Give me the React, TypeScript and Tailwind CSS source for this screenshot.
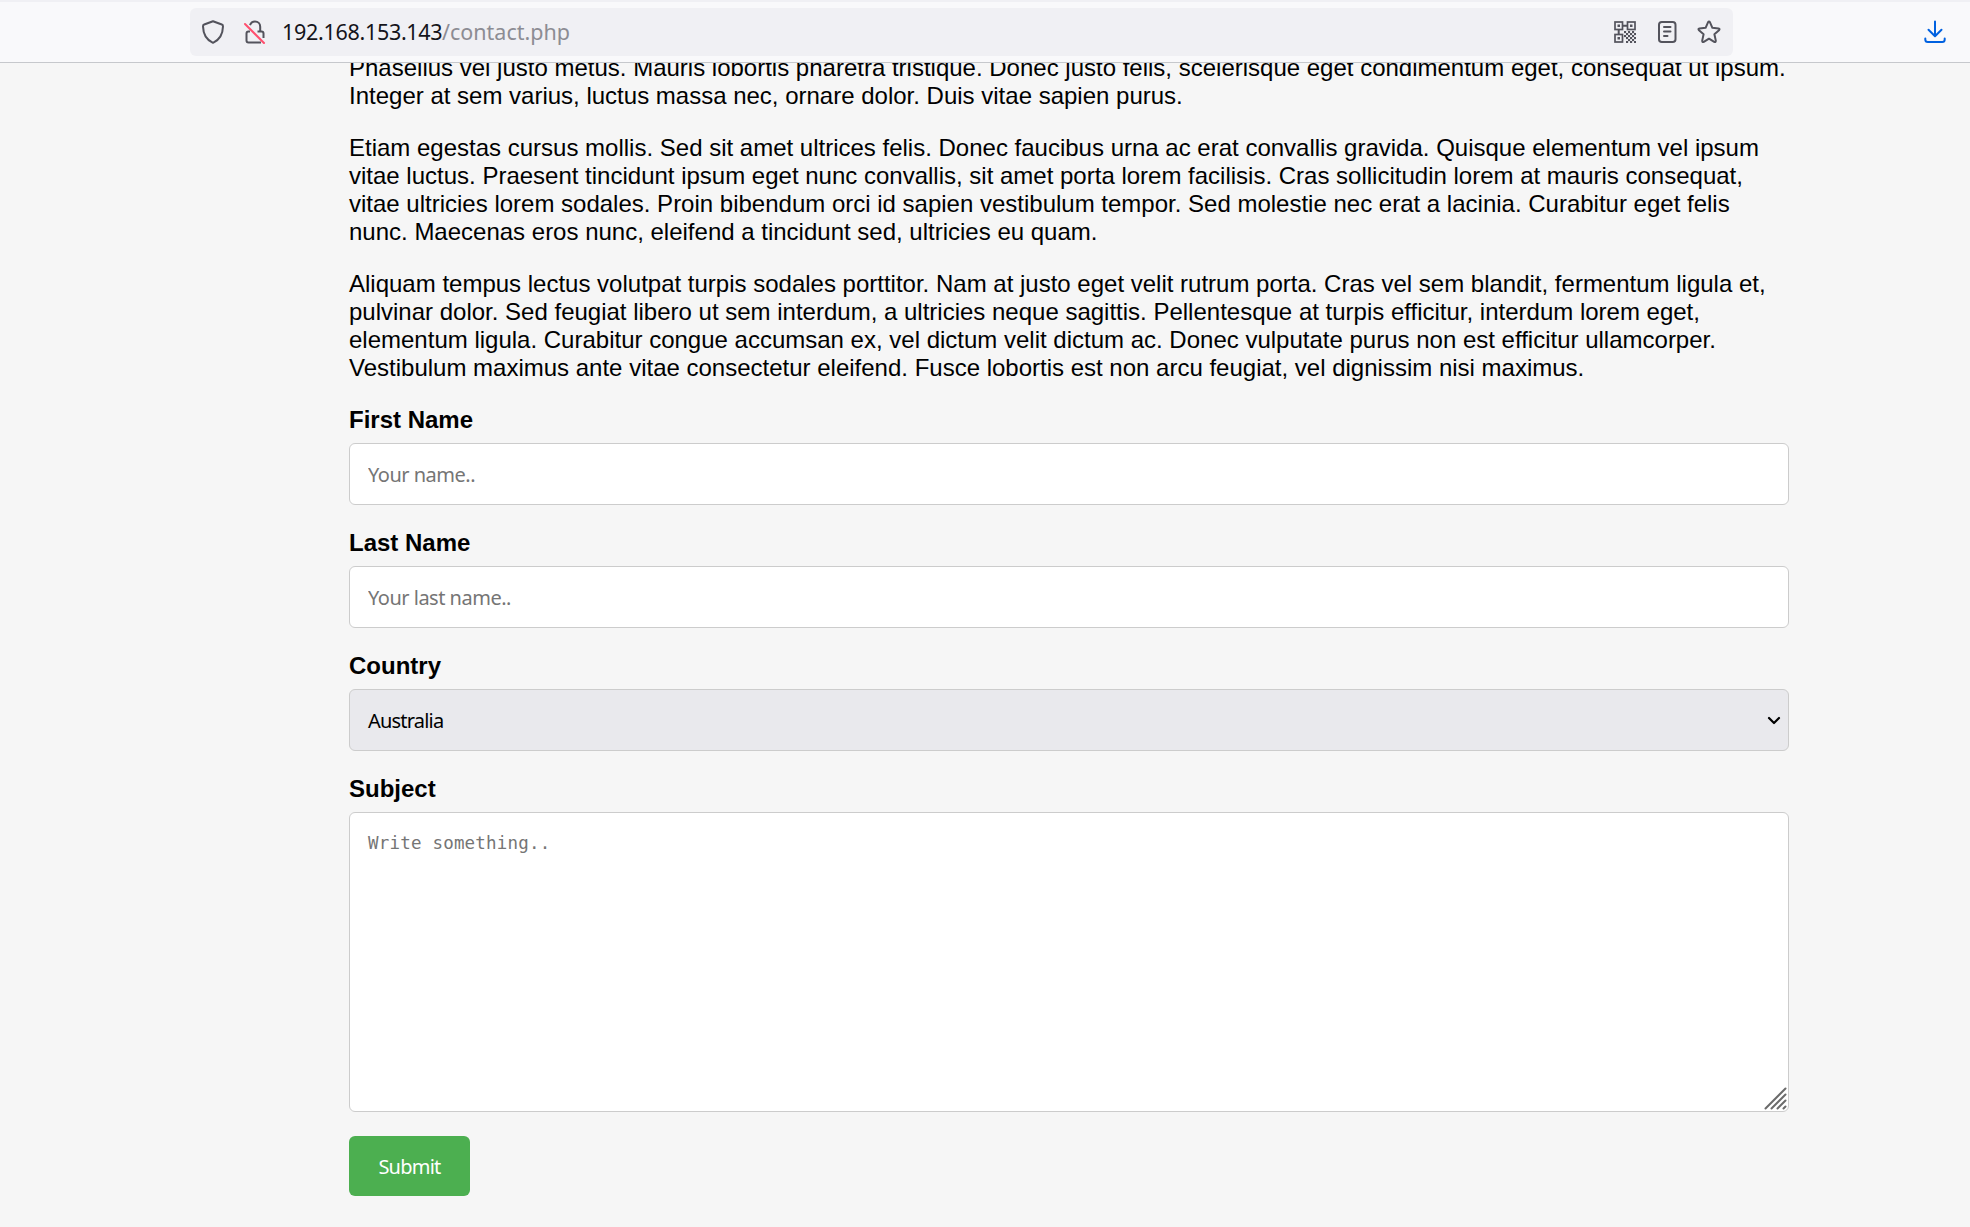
import React from "react";

const paragraphs: string[][] = [
  [
    "Phasellus vel justo metus. Mauris lobortis pharetra tristique. Donec justo felis, scelerisque eget condimentum eget, consequat ut ipsum.",
    "Integer at sem varius, luctus massa nec, ornare dolor. Duis vitae sapien purus.",
  ],
  [
    "Etiam egestas cursus mollis. Sed sit amet ultrices felis. Donec faucibus urna ac erat convallis gravida. Quisque elementum vel ipsum",
    "vitae luctus. Praesent tincidunt ipsum eget nunc convallis, sit amet porta lorem facilisis. Cras sollicitudin lorem at mauris consequat,",
    "vitae ultricies lorem sodales. Proin bibendum orci id sapien vestibulum tempor. Sed molestie nec erat a lacinia. Curabitur eget felis",
    "nunc. Maecenas eros nunc, eleifend a tincidunt sed, ultricies eu quam.",
  ],
  [
    "Aliquam tempus lectus volutpat turpis sodales porttitor. Nam at justo eget velit rutrum porta. Cras vel sem blandit, fermentum ligula et,",
    "pulvinar dolor. Sed feugiat libero ut sem interdum, a ultricies neque sagittis. Pellentesque at turpis efficitur, interdum lorem eget,",
    "elementum ligula. Curabitur congue accumsan ex, vel dictum velit dictum ac. Donec vulputate purus non est efficitur ullamcorper.",
    "Vestibulum maximus ante vitae consectetur eleifend. Fusce lobortis est non arcu feugiat, vel dignissim nisi maximus.",
  ],
];

function ShieldIcon() {
  return (
    <svg width="24" height="24" viewBox="0 0 24 24" fill="none" stroke="#53535c" strokeWidth="2" strokeLinejoin="round">
      <path d="M12 1.300 L20.800 4.500 Q22.100 5 22 6.400 C21.800 14 18.500 20 12 22.800 C5.500 20 2.200 14 2 6.400 Q1.900 5 3.200 4.500 Z" />
    </svg>
  );
}

function InsecureLockIcon() {
  return (
    <svg width="24" height="24" viewBox="0 0 24 24" fill="none">
      <path d="M7 5.200 C7.800 2.900 9.700 1.500 12 1.500 C15 1.500 17.200 3.700 17.200 6.700 V11" stroke="#53535c" strokeWidth="2" />
      <path d="M7 11.500 H5.500 Q3.500 11.500 3.500 13.500 V20.500 Q3.500 22.500 5.500 22.500 H18 M14.500 11.500 H18.500 Q20.500 11.500 20.500 13.500 V18" stroke="#53535c" strokeWidth="2" />
      <path d="M2 4 L21 23" stroke="#ff4f6e" strokeWidth="2" strokeLinecap="round" />
    </svg>
  );
}

function QrIcon() {
  const dots = [
    [14, 10], [18, 10], [12, 12], [16, 12], [20, 12], [10, 14], [14, 14], [18, 14],
    [12, 16], [16, 16], [20, 16], [14, 18], [18, 18], [12, 20], [16, 20], [20, 20], [10, 10],
  ];
  return (
    <svg width="22" height="22" viewBox="0 0 22 22" fill="none">
      <g stroke="#53535c" strokeWidth="1.700">
        <rect x="1" y="1" width="7.500" height="7.500" />
        <rect x="13.500" y="1" width="7.500" height="7.500" />
        <rect x="1" y="13.500" width="7.500" height="7.500" />
        <path d="M8.500 4.700 H13.500 M4.700 8.500 V13.500" strokeWidth="2" />
      </g>
      <g fill="#53535c">
        <rect x="3.500" y="3.500" width="2.500" height="2.500" />
        <rect x="16" y="3.500" width="2.500" height="2.500" />
        <rect x="3.500" y="16" width="2.500" height="2.500" />
        {dots.map(([x, y]) => (
          <rect key={`${x}-${y}`} x={x} y={y} width="2.100" height="2.100" />
        ))}
      </g>
    </svg>
  );
}

function ReaderIcon() {
  return (
    <svg width="24" height="24" viewBox="0 0 24 24" fill="none" stroke="#53535c" strokeWidth="2" strokeLinecap="round">
      <rect x="4" y="2" width="16.500" height="20" rx="2.800" />
      <path d="M9 7 H15.500 M9 11.500 H15.500 M9 16 H12.500" />
    </svg>
  );
}

function StarIcon() {
  return (
    <svg width="24" height="24" viewBox="0 0 24 24" fill="none" stroke="#53535c" strokeWidth="2" strokeLinejoin="round">
      <path d="M11 2.300 Q12 .7 13 2.300 L15.400 7.800 L21.500 8.400 Q23.300 8.900 22 10.300 L17.400 14.300 L18.800 20.600 Q18.900 22.600 17.200 21.900 L12 18.700 L6.800 21.900 Q5.100 22.600 5.200 20.600 L6.600 14.300 L2 10.300 Q.7 8.900 2.500 8.400 L8.600 7.800 Z" />
    </svg>
  );
}

function DownloadIcon() {
  return (
    <svg width="24" height="24" viewBox="0 0 24 24" fill="none" stroke="#0061e0" strokeWidth="2" strokeLinecap="round" strokeLinejoin="round">
      <path d="M12 1.500 V16 M5.500 9.800 L12 16.300 L18.500 9.800 M2.300 18.500 V19.500 Q2.300 22 4.800 22 H19.200 Q21.700 22 21.700 19.500 V18.500" />
    </svg>
  );
}

function BrowserBar() {
  return (
    <header className="relative z-10 flex h-[63px] shrink-0 items-start border-t-2 border-b border-t-[#f0f0f4] border-b-[#c6c8cc] bg-[#f9f9fb]">
      <div className="mt-[6px] ml-[190px] flex h-12 w-[1543px] items-center rounded-[6px] bg-[#f0f0f4] pl-[11px]">
        <ShieldIcon />
        <span className="ml-[18px] flex">
          <InsecureLockIcon />
        </span>
        <span className="ml-[15px] flex font-['Noto_Sans',sans-serif] text-[21.500px] leading-[30px] whitespace-pre">
          <span className="w-[160px] tracking-[-0.3px] text-[#15141a]">192.168.153.143</span>
          <span className="text-[#8c8c93]">/contact.php</span>
        </span>
        <span className="mr-[12px] ml-auto flex items-center">
          <QrIcon />
          <span className="ml-[19px] flex">
            <ReaderIcon />
          </span>
          <span className="ml-[18px] flex">
            <StarIcon />
          </span>
        </span>
      </div>
      <span className="mt-[18px] mr-[23px] ml-auto flex">
        <DownloadIcon />
      </span>
    </header>
  );
}

function Field({ label, children }: { label: string; children: React.ReactNode }) {
  return (
    <label className="mb-6 block">
      <span className="mb-[9px] block font-bold">{label}</span>
      {children}
    </label>
  );
}

const inputClass =
  "block h-[62px] w-full rounded-[6px] border border-[#ccc] bg-white px-[18px] font-['Noto_Sans',sans-serif] text-[20px] tracking-[-0.5px] text-black outline-none placeholder:text-[#757575] placeholder:opacity-100";

export default function App() {
  return (
    <div className="flex h-[1227px] w-[1970px] flex-col overflow-hidden bg-[#f6f6f6] text-black">
      <BrowserBar />
      <main className="-mt-[9px] ml-[349px] w-[1440px] font-['Liberation_Sans',Arial,sans-serif] text-[24px] leading-[28px]">
        {paragraphs.map((lines) => (
          <p key={lines[0]} className="mb-6">
            {lines.map((line) => (
              <span key={line} className="block whitespace-nowrap">
                {line}
              </span>
            ))}
          </p>
        ))}
        <form>
          <Field label="First Name">
            <input className={inputClass} placeholder="Your name.." />
          </Field>
          <Field label="Last Name">
            <input className={inputClass} placeholder="Your last name.." />
          </Field>
          <Field label="Country">
            <div className="flex h-[62px] items-center justify-between rounded-[6px] border border-[#ccc] bg-[#e9e9ed] pt-[2px] pr-[7px] pl-[18px] font-['Noto_Sans',sans-serif] text-[20px] tracking-[-0.8px]">
              Australia
              <svg width="14" height="10" viewBox="0 0 14 10" fill="none" stroke="#000" strokeWidth="2.200" strokeLinecap="round" strokeLinejoin="round">
                <path d="M2 2 L7 7 L12 2" />
              </svg>
            </div>
          </Field>
          <Field label="Subject">
            <div className="relative">
              <textarea
                className="block h-[300px] w-full resize-none rounded-[6px] border border-[#ccc] bg-white px-[18px] py-[18px] font-['DejaVu_Sans_Mono',monospace] text-[17.500px] leading-[24px] tracking-[0.2px] outline-none placeholder:text-[#757575] placeholder:opacity-100"
                placeholder="Write something.."
              />
              <svg
                className="absolute right-[2px] bottom-[2px]"
                width="23"
                height="23"
                viewBox="0 0 23 23"
                stroke="#6b6b6b"
                strokeWidth="2"
                strokeLinecap="round"
              >
                <path d="M1.500 21.500 L21.500 1.500 M7.500 21.500 L21.500 7.500 M13.500 21.500 L21.500 13.500 M19.500 21.500 L21.500 19.500" />
              </svg>
            </div>
          </Field>
          <button
            type="button"
            className="h-[60px] w-[121px] rounded-[6px] bg-[#4caf50] pt-[2px] font-['Noto_Sans',sans-serif] text-[20px] tracking-[-0.75px] text-white"
          >
            Submit
          </button>
        </form>
      </main>
    </div>
  );
}
